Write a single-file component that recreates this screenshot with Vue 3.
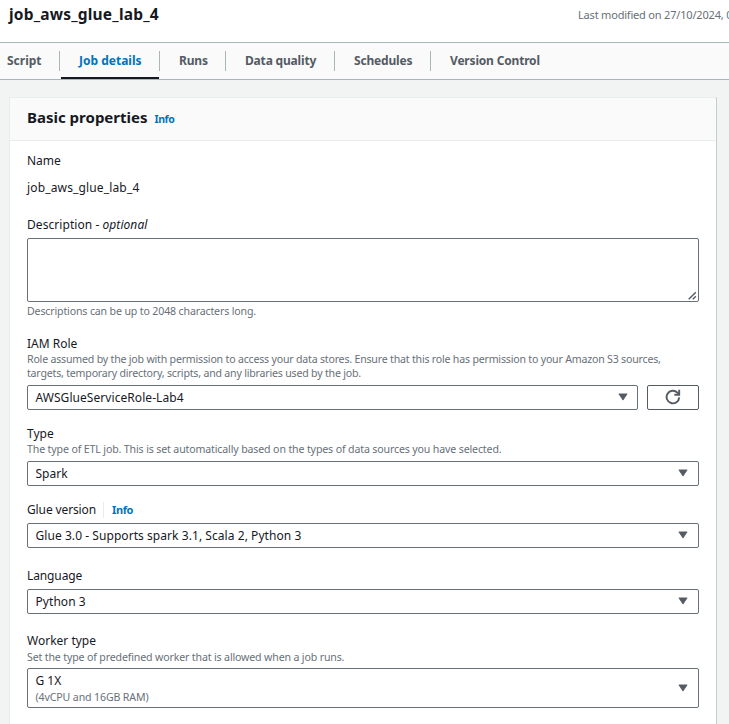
<script setup>
const tabs = [
  { label: 'Script', id: 'script' },
  { label: 'Job details', id: 'details', active: true },
  { label: 'Runs', id: 'runs' },
  { label: 'Data quality', id: 'quality' },
  { label: 'Schedules', id: 'schedules' },
  { label: 'Version Control', id: 'version' },
]
</script>

<template>
  <div class="page">
    <header class="top">
      <h1>job_aws_glue_lab_4</h1>
      <span class="modified">Last modified on 27/10/2024, 0</span>
    </header>
    <nav class="tabs">
      <a v-for="tab in tabs" :key="tab.id" class="tab" :class="[tab.id, { active: tab.active }]">{{ tab.label }}</a>
    </nav>
    <main class="card">
      <div class="card-head">
        <h2>Basic properties</h2>
        <a class="info">Info</a>
      </div>
      <div class="body">
        <section class="field name">
          <div class="label">Name</div>
          <div class="label value">job_aws_glue_lab_4</div>
        </section>

        <section class="field description">
          <div class="label"><span class="wide">Description - <i>optional</i></span></div>
          <div class="textarea">
            <svg class="grip" width="9" height="9" viewBox="0 0 9 9"><path d="M.7 8.3 7.8 1.2M4.8 8.3 7.8 5.3" /></svg>
          </div>
          <div class="hint">Descriptions can be up to 2048 characters long.</div>
        </section>

        <section class="field role">
          <div class="label">IAM Role</div>
          <div class="hint">Role assumed by the job with permission to access your data stores. Ensure that this role has permission to your Amazon S3 sources,<br>targets, temporary directory, scripts, and any libraries used by the job.</div>
          <div class="row">
            <div class="select"><span class="wide">AWSGlueServiceRole-Lab4</span><svg class="caret" width="10" height="8" viewBox="0 0 10 8"><path d="M.9.9h8.2L5 7.1z" /></svg></div>
            <button class="refresh">
              <svg width="16" height="16" viewBox="0 0 16 16"><path d="M14.2 8.4A6.3 6.3 0 1 1 12.4 3.6L13.8 5" /><path d="M14.2 .8v4.9H9.4" /></svg>
            </button>
          </div>
        </section>

        <section class="field type">
          <div class="label">Type</div>
          <div class="hint">The type of ETL job. This is set automatically based on the types of data sources you have selected.</div>
          <div class="select"><span>Spark</span><svg class="caret" width="10" height="8" viewBox="0 0 10 8"><path d="M.9.9h8.2L5 7.1z" /></svg></div>
        </section>

        <section class="field glue">
          <div class="label"><span class="narrow">Glue version</span><a class="info split">Info</a></div>
          <div class="select"><span class="wide">Glue 3.0 - Supports spark 3.1, Scala 2, Python 3</span><svg class="caret" width="10" height="8" viewBox="0 0 10 8"><path d="M.9.9h8.2L5 7.1z" /></svg></div>
        </section>

        <section class="field language">
          <div class="label narrow">Language</div>
          <div class="select"><span class="wide">Python 3</span><svg class="caret" width="10" height="8" viewBox="0 0 10 8"><path d="M.9.9h8.2L5 7.1z" /></svg></div>
        </section>

        <section class="field worker">
          <div class="label">Worker type</div>
          <div class="hint">Set the type of predefined worker that is allowed when a job runs.</div>
          <div class="select tall">
            <div><div class="option">G 1X</div><div class="hint">(4vCPU and 16GB RAM)</div></div>
            <svg class="caret" width="10" height="8" viewBox="0 0 10 8"><path d="M.9.9h8.2L5 7.1z" /></svg>
          </div>
        </section>
      </div>
    </main>
  </div>
</template>

<style>
body { margin: 0; overflow: hidden; }
</style>

<style scoped>
.page { width: 729px; height: 724px; overflow: hidden; box-sizing: border-box; display: flex; flex-direction: column; background: #f2f3f3; color: #16191f; font-family: "Noto Sans", "Open Sans", sans-serif; font-size: 12px; }
.page * { box-sizing: border-box; }
.top { flex: none; height: 42px; background: #fff; display: flex; overflow: hidden; white-space: nowrap; }
h1 { margin: 0 0 0 9px; width: 569px; flex: none; font-size: 15.5px; letter-spacing: .2px; line-height: 22px; padding-top: 3px; font-weight: 700; }
.modified { color: #687078; font-size: 11px; letter-spacing: -.19px; line-height: 16px; padding-top: 7px; }
.tabs { flex: none; height: 38px; display: flex; align-items: flex-start; background: #fafafa; border-top: 1px solid #aab7b8; border-bottom: 1px solid #aab7b8; }
.tab { position: relative; height: 36px; line-height: 36px; color: #545b64; font-weight: 700; letter-spacing: -.18px; white-space: nowrap; flex: none; }
.tab:not(:last-child)::after { content: ""; position: absolute; right: 0; top: 8px; width: 1px; height: 20px; background: #aab7b8; }
.script { width: 60px; padding-left: 7px; letter-spacing: 0; }
.details { width: 100px; padding-left: 19px; letter-spacing: 0; }
.runs { width: 66px; padding-left: 19px; }
.quality { width: 109px; padding-left: 19px; }
.schedules { width: 96px; padding-left: 19px; }
.version { padding-left: 19px; }
.active { color: #0073bb; }
.active::before { content: ""; position: absolute; left: 1px; right: 1px; bottom: 0; height: 2px; background: #16191f; }
.card { flex: none; width: 708px; height: 660px; margin: 17px 0 0 9px; background: #fff; border: 1px solid #eaeded; border-right-color: #c7cdce; }
.card-head { height: 43px; background: #fafafa; border-bottom: 1px solid #eaeded; display: flex; align-items: baseline; padding: 7px 17px 0; }
h2 { margin: 0; width: 127.5px; font-size: 15px; line-height: 24px; white-space: nowrap; }
.info { color: #0073bb; font-weight: 700; font-size: 10.5px; letter-spacing: -.4px; }
.body { padding: 12px 17px 0; }
.field { display: flex; flex-direction: column; }
.label { height: 16px; line-height: 16px; white-space: nowrap; display: flex; align-items: center; }
.hint { color: #687078; font-size: 10.6px; letter-spacing: -.15px; line-height: 14px; white-space: nowrap; }
.role > .hint { letter-spacing: -.2px; }
.wide { letter-spacing: .06px; }
.narrow { letter-spacing: -.12px; }
.value { margin-top: 11px; letter-spacing: .15px; }
.description { margin-top: 21px; }
.textarea { height: 64px; margin-top: 5px; border: 1px solid #687078; border-radius: 2px; display: flex; align-items: flex-end; justify-content: flex-end; padding: 0 1px 1px 0; }
.grip { fill: none; stroke: #545b64; stroke-width: 1.4; }
.description .hint { margin-top: 2px; }
.role { margin-top: 18px; }
.role > .hint, .type > .hint { margin-bottom: 5px; }
.row { display: flex; gap: 9px; }
.row .select { flex: 1; padding-right: 9px; }
.select { height: 25px; border: 1px solid #687078; border-radius: 2px; display: flex; align-items: center; justify-content: space-between; padding: 0 10px 0 7.5px; line-height: 16px; white-space: nowrap; }
.caret { fill: #545b64; stroke: #545b64; stroke-width: .8; stroke-linejoin: round; margin-bottom: 1px; }
.refresh { width: 52px; height: 25px; padding: 0 0 1px; background: #fff; border: 1px solid #545b64; border-radius: 2px; display: flex; align-items: center; justify-content: center; }
.refresh svg { fill: none; stroke: #545b64; stroke-width: 1.9; }
.type, .glue { margin-top: 16px; }
.type > .hint { letter-spacing: -.14px; }
.split { margin-left: 7px; padding-left: 8px; border-left: 1px solid #eaeded; font-size: 11px; }
.glue .select, .language .select { margin-top: 5px; }
.language { margin-top: 20px; }
.worker { margin-top: 19px; }
.worker > .hint { margin-top: 1px; margin-bottom: 4px; }
.tall { height: 40px; }
.option { height: 16px; }
.tall .hint { padding-top: 1px; letter-spacing: -.13px; }
</style>
